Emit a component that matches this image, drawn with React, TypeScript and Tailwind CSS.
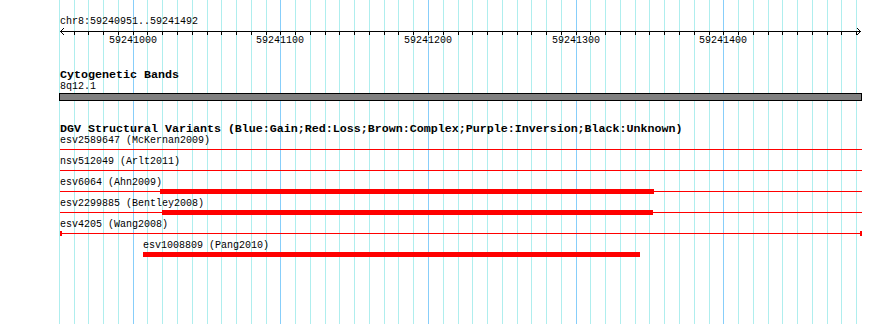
import React from "react";

const START = 59240951;
const X0 = 60.35;
const SCALE = 1.4765;

function toX(bp: number) {
  return X0 + (bp - START) * SCALE;
}

type Variant = {
  label: string;
  labelX: number;
  line?: boolean;
  bar?: [number, number];
  caps?: boolean;
};

const variants: Variant[] = [
  { label: "esv2589647 (McKernan2009)", labelX: 60, line: true },
  { label: "nsv512049 (Arlt2011)", labelX: 60, line: true },
  { label: "esv6064 (Ahn2009)", labelX: 60, line: true, bar: [160, 654] },
  { label: "esv2299885 (Bentley2008)", labelX: 60, line: true, bar: [162, 653] },
  { label: "esv4205 (Wang2008)", labelX: 60, line: true, caps: true },
  { label: "esv1008809 (Pang2010)", labelX: 143, bar: [143, 640] },
];

const gridBps: number[] = [];
for (let bp = 59240950; bp <= 59241490; bp += 10) gridBps.push(bp);

const majorBps = [59241000, 59241100, 59241200, 59241300, 59241400];

function Grid() {
  return (
    <svg className="absolute inset-0" width={890} height={324}>
      {gridBps.map((bp) => {
        const x = Math.round(toX(bp)) + 0.5;
        const major = bp % 100 === 0;
        return <line key={bp} x1={x} x2={x} y1={0} y2={324} stroke={major ? "#87cefa" : "#afeeee"} strokeWidth={1} />;
      })}
    </svg>
  );
}

function Ruler() {
  return (
    <svg className="block" width={890} height={18}>
      <line x1={60} x2={861} y1={4.5} y2={4.5} stroke="#000" strokeWidth={1} />
      <polyline points="64,1 60.5,4.5 64,8" fill="none" stroke="#000" strokeWidth={1} />
      <polyline points="857,1 860.5,4.5 857,8" fill="none" stroke="#000" strokeWidth={1} />
      {gridBps.slice(1).map((bp) => {
        const x = Math.round(toX(bp)) + 0.5;
        return <line key={bp} x1={x} x2={x} y1={4} y2={8} stroke="#000" strokeWidth={1} />;
      })}
      {majorBps.map((bp) => (
        <text
          key={bp}
          x={Math.round(toX(bp))}
          y={16}
          textAnchor="middle"
          fontFamily="'Liberation Mono', monospace"
          fontSize={10}
          fill="#000"
        >
          {bp}
        </text>
      ))}
    </svg>
  );
}

function VariantRow({ v }: { v: Variant }) {
  return (
    <div className="h-[21px]">
      <div className="h-[10px] leading-[10px] whitespace-pre" style={{ paddingLeft: v.labelX }}>
        {v.label}
      </div>
      <div className="relative mt-[1px] h-[5px]">
        {v.line ? <div className="absolute left-[60px] top-[2px] h-[1px] w-[802px] bg-[#ff0000]" /> : null}
        {v.bar ? (
          <div className="absolute top-0 h-[5px] bg-[#ff0000]" style={{ left: v.bar[0], width: v.bar[1] - v.bar[0] }} />
        ) : null}
        {v.caps ? (
          <>
            <div className="absolute left-[60px] top-0 h-[5px] w-[2px] bg-[#ff0000]" />
            <div className="absolute left-[860px] top-0 h-[5px] w-[2px] bg-[#ff0000]" />
          </>
        ) : null}
      </div>
    </div>
  );
}

export default function App() {
  return (
    <div className="relative h-[324px] w-[890px] overflow-hidden bg-white font-['Liberation_Mono',monospace] text-[10px] text-black">
      <Grid />
      <div className="relative flex flex-col pt-[17px]">
        <div className="h-[10px] pl-[60px] leading-[10px]">chr8:59240951..59241492</div>
        <Ruler />

        <div className="mt-[24px] h-[12px] pl-[60px] text-[11.67px] font-bold leading-[12px]">Cytogenetic Bands</div>
        <div className="mt-[1px] h-[10px] pl-[60px] leading-[10px]">8q12.1</div>
        <div className="mt-[1px] pl-[59px]">
          <div className="h-[8px] w-[803px] border border-black bg-[#808080]" />
        </div>

        <div className="mt-[22px] h-[12px] whitespace-pre pl-[60px] text-[11.67px] font-bold leading-[12px]">
          DGV Structural Variants (Blue:Gain;Red:Loss;Brown:Complex;Purple:Inversion;Black:Unknown)
        </div>
        <div className="mt-[1px]">
          {variants.map((v) => (
            <VariantRow key={v.label} v={v} />
          ))}
        </div>
      </div>
    </div>
  );
}
